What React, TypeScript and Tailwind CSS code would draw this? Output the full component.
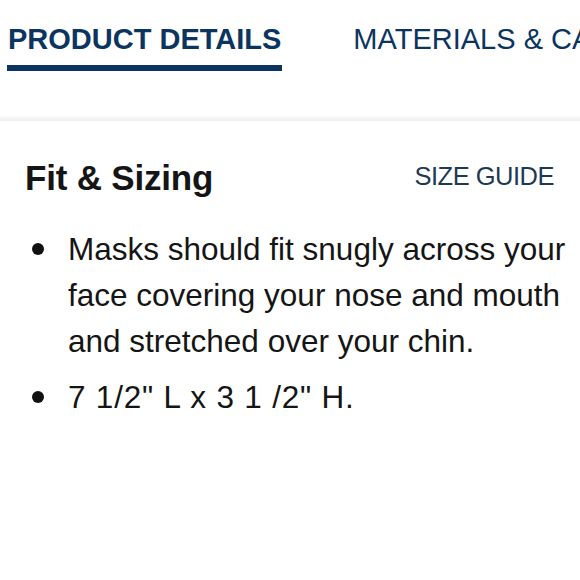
import React from 'react';

const tabs = [
  { label: 'PRODUCT DETAILS', active: true },
  { label: 'MATERIALS & CARE', active: false },
];

const App = () => {
  return (
    <div
      className="w-[580px] h-[580px] overflow-hidden bg-white text-[#151515]"
      style={{ fontFamily: '"Liberation Sans", Arial, sans-serif' }}
    >
      {/* Tabs */}
      <div className="h-[116px] overflow-hidden whitespace-nowrap">
        <div className="flex gap-[70px] pl-[7px] pt-[21px]">
          {tabs.map(tab => (
            <div key={tab.label} className="flex flex-col shrink-0">
              <span
                className={`text-[29px] leading-[36px] text-[#0b3560] px-[1px] ${
                  tab.active ? 'font-bold' : 'font-normal'
                }`}
              >
                {tab.label}
              </span>
              {tab.active && <div className="mt-[8px] h-[6px] bg-[#0b3560]" />}
            </div>
          ))}
        </div>
      </div>
      <div className="h-[5px] bg-gradient-to-b from-[#fbfbfb] to-[#ededed]" />

      {/* Fit & Sizing */}
      <div className="pl-[25px] pt-[37px]">
        <div className="flex items-start justify-between pr-[26px]">
          <h2 className="text-[35px] leading-[40px] font-bold tracking-[-0.2px]">Fit &amp; Sizing</h2>
          <a className="mt-[2px] text-[25.5px] leading-[32px] tracking-[-0.5px] text-[#1d3a55]">SIZE GUIDE</a>
        </div>

        <ul className="mt-[28px] flex flex-col gap-[10px] whitespace-nowrap">
          <li className="flex items-start text-[31.5px] leading-[46px]">
            <span className="mt-[17px] ml-[7px] mr-[24px] w-[12px] h-[12px] rounded-full bg-[#111] shrink-0" />
            <span>
              Masks should fit snugly across your
              <br />
              face covering your nose and mouth
              <br />
              and stretched over your chin.
            </span>
          </li>
          <li className="flex items-start text-[31.5px] leading-[46px]">
            <span className="mt-[17px] ml-[7px] mr-[24px] w-[12px] h-[12px] rounded-full bg-[#111] shrink-0" />
            <span className="tracking-[0.8px]">7 1/2" L x 3 1 /2" H.</span>
          </li>
        </ul>
      </div>
    </div>
  );
};

export default App;
